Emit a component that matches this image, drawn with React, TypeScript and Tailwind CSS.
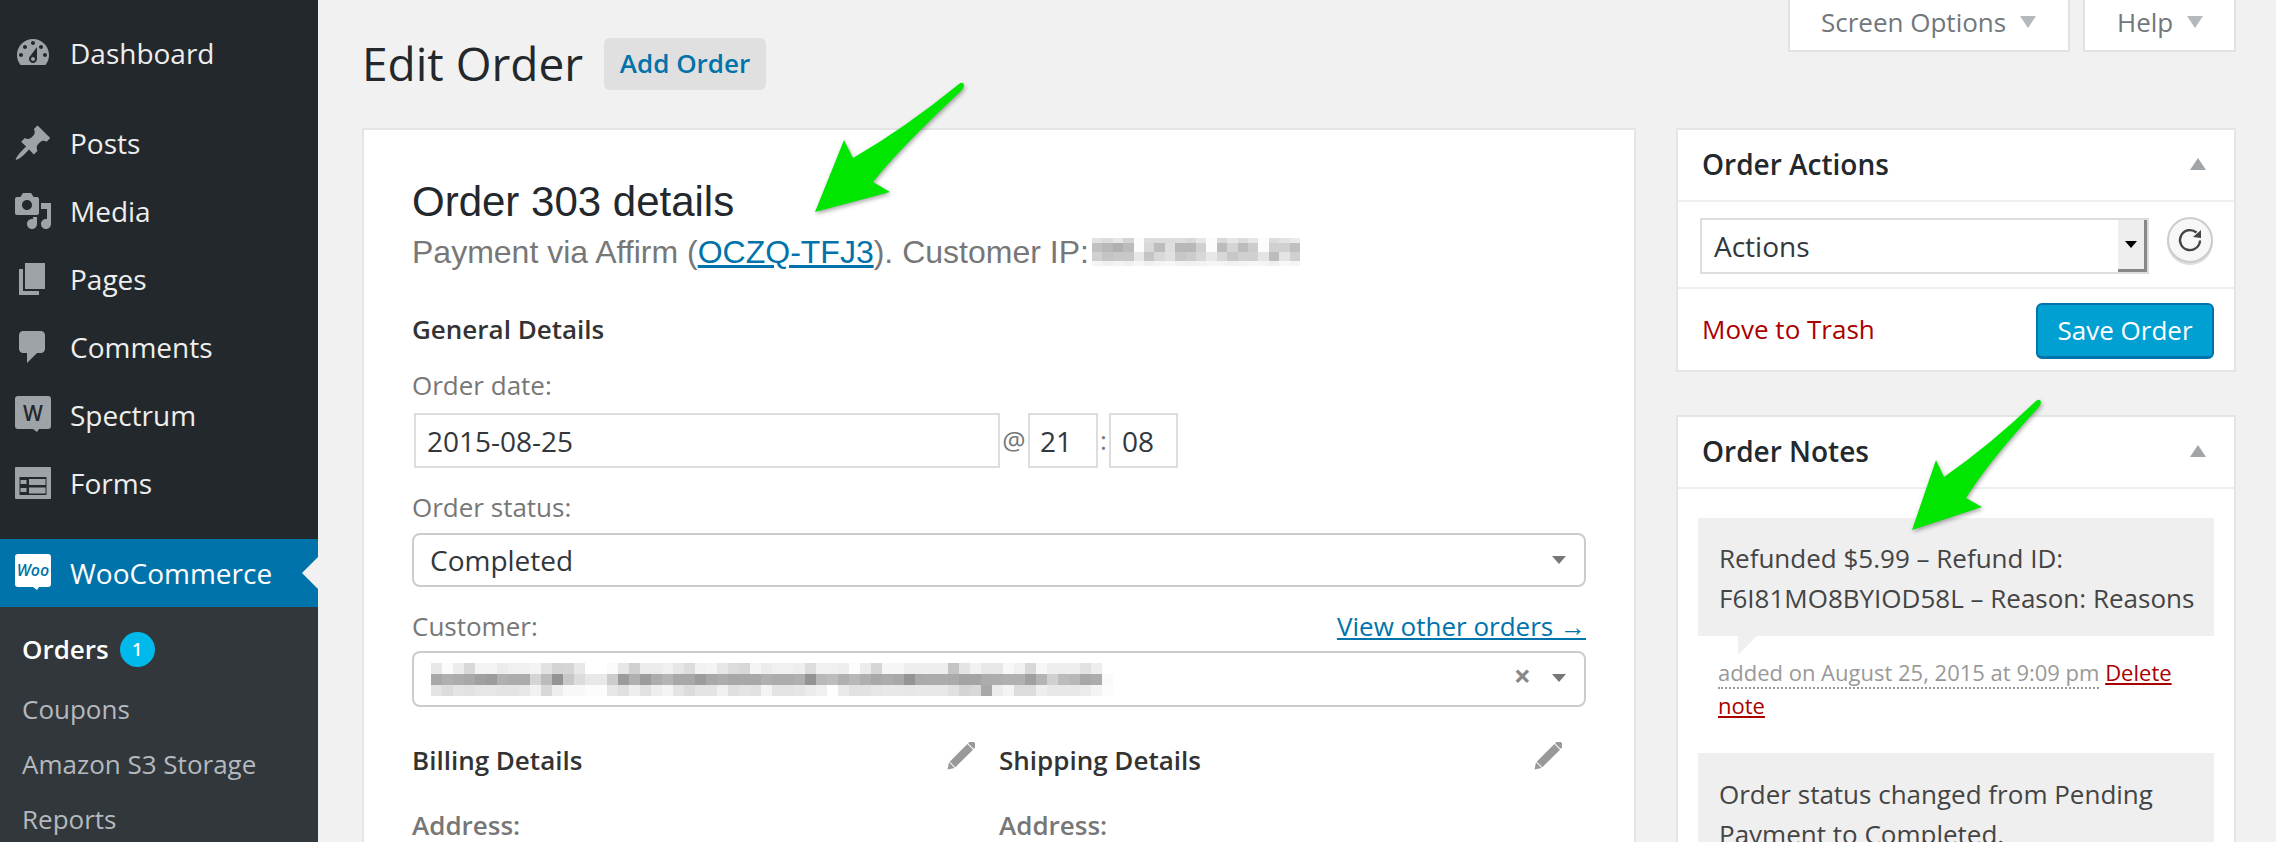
import { ReactNode } from 'react'

const ICON = '#9ea3a8'

const CUSTOMER_MOSAIC = [
  'e8 fb ec d8 f4 f4 ec f0 f0 f4 e2 d4 d6 e8 ff ff fa e6 d0 ec ec f0 e6 dc f2 f4 e6 dc d8 f4 ec f0 f0 ee dc f0 f0 ee fc ec d6 f6 f6 ee ee ee ee c4 e4 f2 e8 e8 f8 f0 d8 f6 ee ee ee e2 ee ff',
  'a8 b0 ac a8 a0 9c b0 ac ac d4 bc 94 c8 dc e8 e8 cc 9c b0 9c ac b4 a8 a8 9c a8 ac a8 a8 a8 b0 ac ac b0 94 b8 bc b0 b8 b0 a8 ac a8 94 aa ac ac aa a4 a4 ac ae b0 b0 a0 b4 d0 bc b8 a8 ac fa',
  'e4 dc e4 e2 e6 e6 e4 e4 e8 f2 d8 ee f8 f8 fc fc e6 e0 ee e2 ee f4 e4 dc e4 e4 f0 e0 e4 e2 f4 e4 e4 e6 ec f0 fe ea e2 e2 e6 e8 e8 e6 e8 e8 e8 e0 d4 d8 a8 ec f4 dc dc ee e8 e8 e8 ec f4 fc',
]

const IP_MOSAIC = [
  'e2 dc e6 d4 fc dc dc dc de d9 e6 fc d9 e6 dc e6 fc dc e4 ea',
  'c0 b8 b0 bc fc d8 bc de b8 b8 d0 fc bc d4 bc cc fc d0 d0 c0',
  'd0 c4 c8 c8 e8 c4 d8 e0 c8 cc d8 e8 d8 c8 d0 d0 e4 bc e4 d0',
  'f4 f0 f4 f0 f6 f0 f4 f6 f2 f0 f2 f6 f4 f2 f4 f6 f4 f0 f8 f4',
]

function Mosaic({ rows, cell, heights, className }: { rows: string[]; cell: number; heights: number[]; className?: string }) {
  const cols = Math.max(...rows.map(r => r.split(' ').length))
  const total = heights.reduce((a, b) => a + b, 0)
  return (
    <svg width={cols * cell} height={total} className={className} shapeRendering="crispEdges">
      {rows.map((r, y) => r.split(' ').map((v, x) => (
        <rect key={`${y}-${x}`} x={x * cell} y={heights.slice(0, y).reduce((a, b) => a + b, 0)} width={cell} height={heights[y]} fill={`#${v}${v}${v}`} />
      )))}
    </svg>
  )
}

function Dash({ d }: { d: string }) {
  return <svg width="40" height="40" viewBox="0 0 20 20" fill={ICON}><path d={d} /></svg>
}

function BubbleIcon({ fill, children }: { fill: string; children: ReactNode }) {
  return (
    <svg width="40" height="40" viewBox="0 0 40 40">
      <path d="M5 1h30a3 3 0 0 1 3 3v27a3 3 0 0 1-3 3H26l-2 3-4-3H5a3 3 0 0 1-3-3V4a3 3 0 0 1 3-3z" fill={fill} />
      {children}
    </svg>
  )
}

function FormsIcon() {
  return (
    <svg width="40" height="40" viewBox="0 0 40 40">
      <rect x="2" y="4" width="36" height="32" rx="1" fill={ICON} />
      <rect x="6.5" y="14" width="27" height="18" fill="#23282d" />
      <rect x="7.5" y="17" width="6" height="4" fill={ICON} />
      <rect x="7.5" y="25" width="6" height="4" fill={ICON} />
      <rect x="16" y="16" width="16.5" height="6" fill={ICON} />
      <rect x="16" y="24.5" width="16.5" height="6" fill={ICON} />
    </svg>
  )
}

function Pencil() {
  return (
    <svg width="28" height="28" viewBox="0 0 28 28" fill="#999">
      <g transform="rotate(45 14 14)">
        <rect x="10" y="-5" width="8" height="5" rx="1" />
        <rect x="10" y="1" width="8" height="25" />
        <polygon points="10,27 18,27 14,33" />
      </g>
    </svg>
  )
}

function MenuItem({ icon, label }: { icon: ReactNode; label: string }) {
  return (
    <div className="flex h-[68px] shrink-0 items-center">
      <div className="ml-[13px] w-[57px] shrink-0">{icon}</div>
      <span className="text-[28px] text-[#eeeeee]">{label}</span>
    </div>
  )
}

function Sidebar() {
  return (
    <aside className="flex h-full w-[318px] shrink-0 flex-col bg-[#23282d] pt-[19px]">
      <MenuItem label="Dashboard" icon={<Dash d="M3.76 16h12.48c1.1-1.37 1.76-3.11 1.76-5 0-4.42-3.58-8-8-8s-8 3.58-8 8c0 1.89.66 3.63 1.76 5zM10 4c.55 0 1 .45 1 1s-.45 1-1 1-1-.45-1-1 .45-1 1-1zM6 6c.55 0 1 .45 1 1s-.45 1-1 1-1-.45-1-1 .45-1 1-1zm8 0c.55 0 1 .45 1 1s-.45 1-1 1-1-.45-1-1 .45-1 1-1zm-5.37 5.55L12 7v6c0 1.1-.9 2-2 2s-2-.9-2-2c0-.57.24-1.08.63-1.45zM4 10c.55 0 1 .45 1 1s-.45 1-1 1-1-.45-1-1 .45-1 1-1zm12 0c.55 0 1 .45 1 1s-.45 1-1 1-1-.45-1-1 .45-1 1-1zm-5 3c0-.55-.45-1-1-1s-1 .45-1 1 .45 1 1 1 1-.45 1-1z" />} />
      <div className="h-[22px] shrink-0" />
      <MenuItem label="Posts" icon={<Dash d="M10.44 3.02l1.82-1.82 6.36 6.35-1.83 1.82c-1.05-.68-2.48-.57-3.41.36l-.75.75c-.92.93-1.04 2.35-.35 3.41l-1.83 1.82-2.41-2.41-2.8 2.79c-.42.42-3.38 2.71-3.8 2.29s1.86-3.39 2.28-3.81l2.79-2.79L4.1 9.36l1.83-1.82c1.05.69 2.48.57 3.4-.36l.75-.75c.93-.92 1.05-2.35.36-3.41z" />} />
      <MenuItem label="Media" icon={<Dash d="M13 11V4c0-.55-.45-1-1-1h-1.67L9 1H5L3.67 3H2c-.55 0-1 .45-1 1v7c0 .55.45 1 1 1h10c.55 0 1-.45 1-1zM7 4.5c1.38 0 2.5 1.12 2.5 2.5S8.38 9.5 7 9.5 4.5 8.38 4.5 7 5.62 4.5 7 4.5zM14 6h5v10.5c0 1.38-1.12 2.5-2.5 2.5S14 17.88 14 16.5s1.12-2.5 2.5-2.5c.17 0 .34.02.5.05V9h-3V6zm-4 8.05V13h2v3.5c0 1.38-1.12 2.5-2.5 2.5S7 17.88 7 16.5 8.12 14 9.5 14c.17 0 .34.02.5.05z" />} />
      <MenuItem label="Pages" icon={<Dash d="M6 15V2h10v13H6zm-1 1h8v2H3V5h2v11z" />} />
      <MenuItem label="Comments" icon={<Dash d="M5 2h9c1.1 0 2 .9 2 2v7c0 1.1-.9 2-2 2h-2l-5 5v-5H5c-1.1 0-2-.9-2-2V4c0-1.1.9-2 2-2z" />} />
      <MenuItem label="Spectrum" icon={
        <BubbleIcon fill={ICON}>
          <text x="20" y="26" textAnchor="middle" fontSize="21" fontWeight="600" fill="#23282d">W</text>
        </BubbleIcon>
      } />
      <MenuItem label="Forms" icon={<FormsIcon />} />
      <div className="h-[22px] shrink-0" />
      <div className="relative flex h-[68px] shrink-0 items-center bg-[#0073aa]">
        <div className="ml-[13px] w-[57px] shrink-0">
          <BubbleIcon fill="#ffffff">
            <text x="20" y="23" textAnchor="middle" fontSize="16" fontStyle="italic" fontWeight="600" fill="#0073aa">Woo</text>
          </BubbleIcon>
        </div>
        <span className="text-[28px] text-white">WooCommerce</span>
        <div className="absolute right-0 top-[18px] border-y-[16px] border-r-[16px] border-y-transparent border-r-[#f1f1f1]" />
      </div>
      <div className="flex-1 bg-[#32373c] pt-[16px] text-[26px] text-[#b4b9be]">
        <div className="mb-[7px] flex h-[52px] items-center pl-[22px]">
          <span className="font-semibold text-white">Orders</span>
          <span className="ml-[11px] flex h-[35px] w-[35px] items-center justify-center rounded-full bg-[#00b9eb] text-[18px] font-semibold text-white">1</span>
        </div>
        <div className="flex h-[55px] items-center pl-[22px]">Coupons</div>
        <div className="flex h-[55px] items-center pl-[22px]">Amazon S3 Storage</div>
        <div className="flex h-[55px] items-center pl-[22px]">Reports</div>
      </div>
    </aside>
  )
}

function OrderCard() {
  return (
    <div className="mt-[38px] h-[800px] border-2 border-[#e5e5e5] bg-white pl-[48px] pr-[48px] pt-[47px]">
      <h2 className="font-['Liberation_Sans',sans-serif] text-[42px] leading-[50px] text-[#23282d]">Order 303 details</h2>
      <div className="flex items-center font-['Liberation_Sans',sans-serif] text-[32px] leading-[50px] text-[#777777]">
        <span>Payment via Affirm (</span>
        <a className="text-[#0073aa] underline">OCZQ-TFJ3</a>
        <span>). Customer IP:</span>
        <Mosaic rows={IP_MOSAIC} cell={10.4} heights={[5, 9, 9, 5]} className="ml-[3px] blur-[0.5px]" />
      </div>

      <h3 className="mt-[34px] text-[26px] font-semibold leading-[36px] text-[#333333]">General Details</h3>
      <div className="mt-[20px] text-[26px] leading-[36px] text-[#777777]">Order date:</div>
      <div className="mt-[10px] flex h-[55px] items-stretch text-[28px] text-[#32373c]">
        <div className="ml-[2px] flex w-[586px] items-center border-2 border-[#dddddd] pl-[11px]">2015-08-25</div>
        <span className="flex w-[28px] items-center justify-center text-[26px] text-[#777777]">@</span>
        <div className="flex w-[70px] items-center border-2 border-[#dddddd] pl-[10px]">21</div>
        <span className="flex w-[11px] items-center justify-center text-[26px] text-[#777777]">:</span>
        <div className="flex w-[69px] items-center border-2 border-[#dddddd] pl-[11px]">08</div>
      </div>

      <div className="mt-[21px] text-[26px] leading-[36px] text-[#777777]">Order status:</div>
      <div className="relative mt-[8px] flex h-[54px] items-center rounded-[8px] border-2 border-[#cccccc] pl-[16px] text-[28px] text-[#32373c]">
        <span>Completed</span>
        <div className="absolute right-[18px] top-[21px] border-x-[7px] border-t-[8px] border-x-transparent border-t-[#777777]" />
      </div>

      <div className="mt-[21px] flex items-center justify-between text-[26px] leading-[36px] text-[#777777]">
        <span>Customer:</span>
        <a className="text-[#0073aa] underline">View other orders →</a>
      </div>
      <div className="relative mt-[7px] flex h-[56px] items-center rounded-[8px] border-2 border-[#cccccc] pl-[17px]">
        <Mosaic rows={CUSTOMER_MOSAIC} cell={11} heights={[11, 11, 11]} className="blur-[0.5px]" />
        <span className="absolute right-[53px] top-[5px] text-[30px] font-bold leading-[36px] text-[#888888]">×</span>
        <div className="absolute right-[18px] top-[21px] border-x-[7px] border-t-[8px] border-x-transparent border-t-[#777777]" />
      </div>

      <div className="mt-[35px] grid grid-cols-2">
        {['Billing Details', 'Shipping Details'].map(t => (
          <div key={t}>
            <div className="flex h-[36px] items-center justify-between pr-[24px]">
              <h3 className="text-[26px] font-semibold text-[#333333]">{t}</h3>
              <div className="mb-[8px]"><Pencil /></div>
            </div>
            <div className="mt-[29px] text-[26px] font-semibold leading-[36px] text-[#777777]">Address:</div>
          </div>
        ))}
      </div>
    </div>
  )
}

function Tab({ label, className }: { label: string; className: string }) {
  return (
    <div className={`flex h-[52px] items-center border-x-2 border-b-2 border-[#e2e2e2] bg-white pb-[6px] text-[26px] text-[#72777c] ${className}`}>
      <span>{label}</span>
      <div className="ml-[14px] border-x-[8px] border-t-[12px] border-x-transparent border-t-[#b4b9be]" />
    </div>
  )
}

function BoxHeader({ title }: { title: string }) {
  return (
    <div className="flex h-[72px] items-center justify-between border-b-2 border-[#eeeeee] pb-[2px] pl-[24px] pr-[28px]">
      <h2 className="text-[28px] font-semibold text-[#23282d]">{title}</h2>
      <div className="border-x-[8px] border-b-[12px] border-x-transparent border-b-[#a0a5aa]" />
    </div>
  )
}

function OrderActions() {
  return (
    <div className="mt-[76px] h-[244px] border-2 border-[#e5e5e5] bg-white">
      <BoxHeader title="Order Actions" />
      <div className="flex h-[87px] items-start gap-[18px] border-b-2 border-[#eeeeee] pl-[22px] pt-[16px]">
        <div className="flex h-[56px] w-[449px] items-center justify-between border-2 border-[#dddddd] text-[28px] text-[#32373c]">
          <span className="pl-[12px]">Actions</span>
          <div className="flex h-full w-[29px] items-center justify-center border-b-[3px] border-r-[3px] border-b-[#888888] border-r-[#888888] bg-[#eeeeee]">
            <div className="border-x-[6px] border-t-[7px] border-x-transparent border-t-black" />
          </div>
        </div>
        <div className="-mt-px flex h-[46px] w-[46px] items-center justify-center rounded-full border-2 border-[#cccccc] bg-[#f7f7f7] shadow-[0_2px_0_#dddddd]">
          <svg width="28" height="28" viewBox="0 0 28 28">
            <path d="M24 14.5A10 10 0 1 1 20.5 6.5" fill="none" stroke="#444444" strokeWidth="2.4" />
            <polygon points="25,4 25,12 17,11" fill="#444444" />
          </svg>
        </div>
      </div>
      <div className="flex items-center justify-between pl-[24px] pr-[20px] pt-[14px]">
        <a className="mb-[3px] text-[26px] text-[#aa0000]">Move to Trash</a>
        <button className="flex h-[56px] w-[178px] items-center justify-center rounded-[6px] border-2 border-b-[3px] border-[#0073aa] bg-[#00a0d2] text-[26px] text-white">Save Order</button>
      </div>
    </div>
  )
}

function OrderNotes() {
  return (
    <div className="mt-[43px] h-[600px] border-2 border-[#e5e5e5] bg-white">
      <BoxHeader title="Order Notes" />
      <div className="px-[20px] pt-[29px] text-[26px] leading-[40px] text-[#444444]">
        <div className="relative h-[118px] bg-[#efefef] pl-[21px] pt-[20px]">
          Refunded $5.99 – Refund ID:<br />F6I81MO8BYIOD58L – Reason: Reasons
          <div className="absolute left-[40px] top-full border-r-[19px] border-t-[19px] border-r-transparent border-t-[#efefef]" />
        </div>
        <p className="mt-[20px] pl-[20px] text-[22px] leading-[33px] text-[#999999]">
          <span className="border-b-2 border-dotted border-[#999999]">added on August 25, 2015 at 9:09 pm</span>{' '}
          <a className="text-[#aa0000] underline">Delete note</a>
        </p>
        <div className="mt-[31px] bg-[#efefef] pb-[20px] pl-[21px] pr-[21px] pt-[21px]">
          Order status changed from Pending Payment to Completed.
        </div>
      </div>
    </div>
  )
}

function GreenArrows() {
  return (
    <>
      <svg className="absolute left-[810px] top-[78px] drop-shadow-[1px_2px_2px_rgba(0,0,0,0.35)]" width="160" height="140" viewBox="0 0 160 140">
        <path d="M5 134 L34 62 L43 80 Q95 50 149 6 Q153 3 154 7 Q154 10 151 13 Q90 70 63 104 L80 114 Z" fill="#00e600" />
      </svg>
      <svg className="absolute left-[1905px] top-[395px] drop-shadow-[1px_2px_2px_rgba(0,0,0,0.35)]" width="140" height="140" viewBox="0 0 140 140">
        <path d="M7 135 L31 65 L39 82 Q85 50 131 6 Q135 3 136 7 Q136 10 133 13 Q85 65 61 103 L77 112 Z" fill="#00e600" />
      </svg>
    </>
  )
}

export default function App() {
  return (
    <div className="relative flex h-[842px] w-full overflow-hidden bg-[#f1f1f1] font-['Open_Sans',sans-serif]">
      <Sidebar />
      <main className="grid flex-1 grid-cols-[1274px_560px] gap-[40px] pl-[44px]">
        <div>
          <div className="mt-[38px] flex h-[52px] items-center">
            <h1 className="pb-[2px] text-[46px] leading-[52px] text-[#23282d]">Edit Order</h1>
            <a className="ml-[21px] flex h-[52px] w-[162px] items-center justify-center rounded-[6px] bg-[#e0e0e0] pb-[2px] text-[26px] font-semibold text-[#0073aa]">Add Order</a>
          </div>
          <OrderCard />
        </div>
        <div>
          <div className="flex justify-end gap-[13px]">
            <Tab label="Screen Options" className="w-[282px] pl-[31px]" />
            <Tab label="Help" className="w-[153px] pl-[32px]" />
          </div>
          <OrderActions />
          <OrderNotes />
        </div>
      </main>
      <GreenArrows />
    </div>
  )
}
